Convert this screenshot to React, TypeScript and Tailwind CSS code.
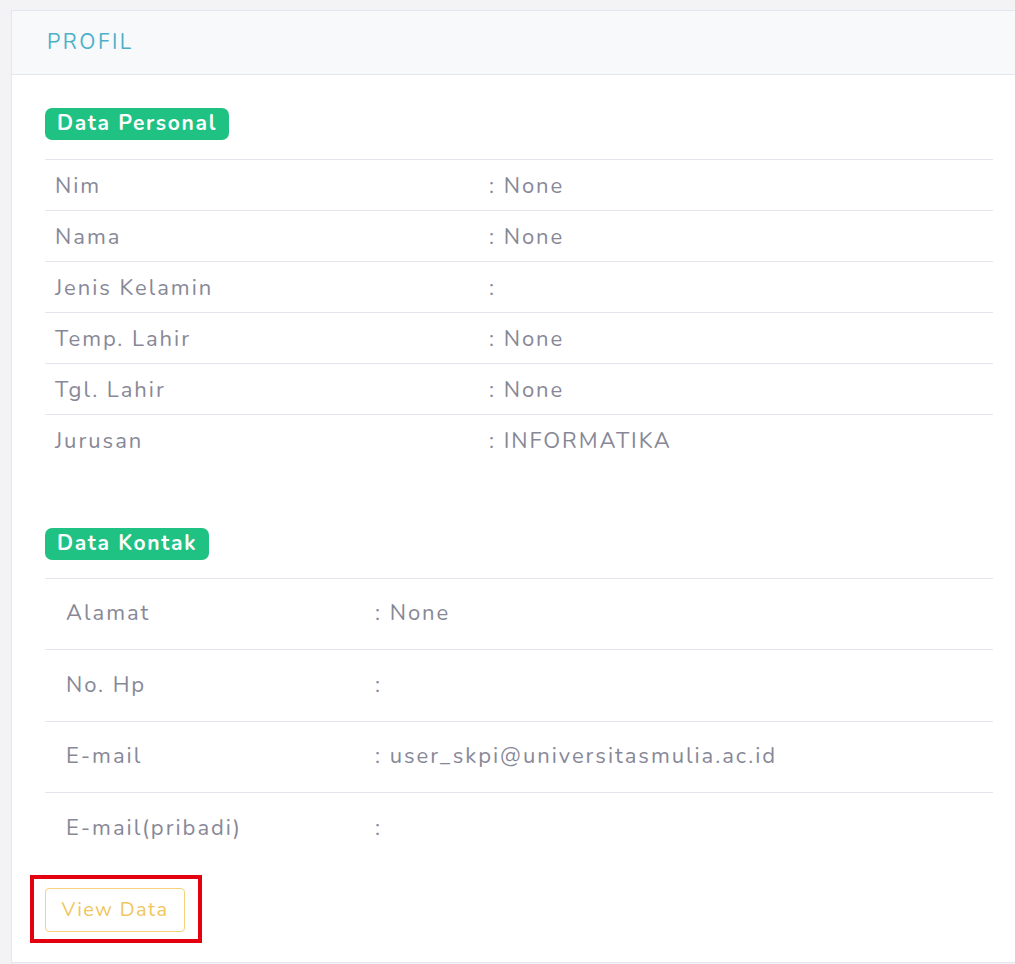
import React from "react";

type Row = { label: string; value: string };

const personal: Row[] = [
  { label: "Nim", value: ": None" },
  { label: "Nama", value: ": None" },
  { label: "Jenis Kelamin", value: ":" },
  { label: "Temp. Lahir", value: ": None" },
  { label: "Tgl. Lahir", value: ": None" },
  { label: "Jurusan", value: ": INFORMATIKA" },
];

const kontak: Row[] = [
  { label: "Alamat", value: ": None" },
  { label: "No. Hp", value: ":" },
  { label: "E-mail", value: ": user_skpi@universitasmulia.ac.id" },
  { label: "E-mail(pribadi)", value: ":" },
];

function Badge({ children }: { children: React.ReactNode }) {
  return (
    <span className="inline-flex h-[32px] items-center rounded-[7px] bg-[#1fc283] px-[12px] text-[21px] font-bold tracking-[0.08em] text-white">
      {children}
    </span>
  );
}

export default function App() {
  return (
    <div
      className="min-h-screen bg-[#f3f3f5] pt-[10px] pl-[11px]"
      style={{ fontFamily: "Nunito, Lato, 'Open Sans', sans-serif" }}
    >
      <div className="border border-r-0 border-[#e3e6f0] bg-white">
        <div className="flex h-[64px] items-center border-b border-[#e3e6f0] bg-[#f8f9fb] pl-[35px]">
          <h2 className="text-[21px] tracking-[0.12em] text-[#4bb0c8]">PROFIL</h2>
        </div>

        <div className="pt-[33px] pb-[30px] pl-[33px] pr-[22px]">
          <Badge>Data Personal</Badge>
          <table className="mt-[19px] w-full border-collapse text-[22px] tracking-[0.09em] text-[#878897]">
            <tbody>
              {personal.map((r) => (
                <tr key={r.label} className="border-t border-[#e3e6f0]">
                  <td className="h-[51px] w-[444px] pl-[10px] pt-[2px]">{r.label}</td>
                  <td className="pt-[2px]">{r.value}</td>
                </tr>
              ))}
            </tbody>
          </table>

          <div className="mt-[62px]">
            <Badge>Data Kontak</Badge>
          </div>
          <table className="mt-[18px] w-full border-collapse text-[22px] tracking-[0.09em] text-[#878897]">
            <tbody>
              {kontak.map((r) => (
                <tr key={r.label} className="border-t border-[#e3e6f0]">
                  <td className="h-[71.6px] w-[330px] pl-[21px]">{r.label}</td>
                  <td>{r.value}</td>
                </tr>
              ))}
            </tbody>
          </table>

          <div className="relative mt-[24px] inline-block">
            <button className="h-[44px] w-[140px] rounded-[4px] border border-[#f6d27a] text-[20px] tracking-[0.07em] text-[#f0c660]">
              View Data
            </button>
            <span className="pointer-events-none absolute -top-[13px] -left-[15px] -right-[17px] -bottom-[11px] border-[4px] border-[#e5000f]" />
          </div>
        </div>
      </div>
    </div>
  );
}
